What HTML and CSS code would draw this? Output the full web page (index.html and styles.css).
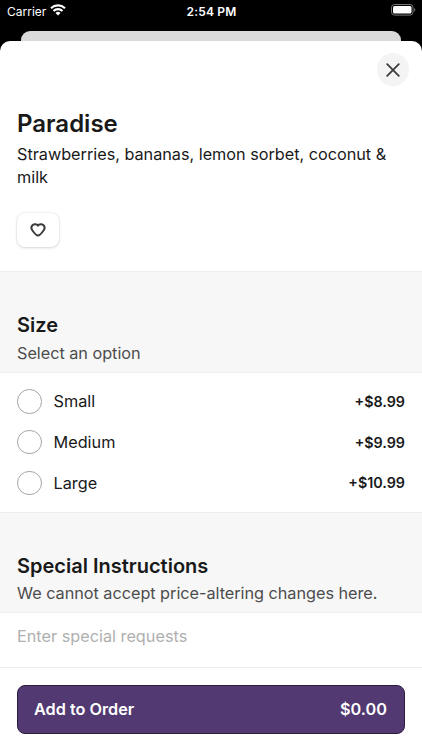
FILE: index.html
```html
<!DOCTYPE html>
<html lang="en">
<head>
<meta charset="utf-8">
<title>Paradise</title>
<link rel="stylesheet" href="styles.css">
</head>
<body>
<header class="status">
  <div class="carrier"><span>Carrier</span>
    <svg width="16" height="12" viewBox="0 0 16 12" fill="none" stroke="#fff" stroke-width="2.2"><path d="M1 4.200a10.200 10.200 0 0 1 14 0M3.500 7a6.500 6.500 0 0 1 9 0"/><path d="M8 11.500 5.500 9a3.600 3.600 0 0 1 5 0z" fill="#fff" stroke="none"/></svg>
  </div>
  <time class="clock">2:54 PM</time>
  <svg class="battery" width="25" height="12" viewBox="0 0 25 12"><rect x=".5" y=".5" width="21.5" height="10.6" rx="3" fill="none" stroke="#777"/><rect x="2" y="2" width="18.5" height="7.6" rx="1.6" fill="#fff"/><path d="M23.2 4v3.700c1.500-.6 1.500-3.100 0-3.700z" fill="#777"/></svg>
</header>
<div class="backdrop"></div>
<main class="sheet">
  <div class="toolbar">
    <button class="close" aria-label="Close"><svg width="14" height="14" viewBox="0 0 14 14" fill="none" stroke="#3c3c3c" stroke-width="1.8" stroke-linecap="round"><path d="m1.200 1.200 11.600 11.600M12.800 1.200 1.200 12.800"/></svg></button>
  </div>
  <section class="intro">
    <h1>Paradise</h1>
    <p>Strawberries, bananas, lemon sorbet, coconut &amp; milk</p>
    <button class="favorite" aria-label="Favorite"><svg width="16" height="14" viewBox="0 0 16 14" fill="none" stroke="#3c3c3c" stroke-width="2" stroke-linejoin="round"><path d="M8 2.600C6.800.9 4.200.7 2.700 2 1.200 3.400 1.200 5.600 2.300 7.200 3.600 9.100 6.500 12.500 8 12.500S12.400 9.100 13.700 7.200C14.800 5.600 14.800 3.400 13.300 2 11.800.7 9.200.9 8 2.600z"/></svg></button>
  </section>
  <section class="heading">
    <h2>Size</h2>
    <p>Select an option</p>
  </section>
  <ul class="options">
    <li><span class="radio"></span><span>Small</span><b>+$8.99</b></li>
    <li><span class="radio"></span><span>Medium</span><b>+$9.99</b></li>
    <li><span class="radio"></span><span>Large</span><b>+$10.99</b></li>
  </ul>
  <section class="heading instructions">
    <h2>Special Instructions</h2>
    <p>We cannot accept price-altering changes here.</p>
  </section>
  <div class="request">Enter special requests</div>
  <footer><button class="order"><span>Add to Order</span><span>$0.00</span></button></footer>
</main>
</body>
</html>
```
FILE: styles.css
```css
* { box-sizing: border-box; }
body { margin: 0; width: 422px; height: 750px; overflow: hidden; background: #000; font-family: Inter, sans-serif; color: #191919; font-size: 16.25px; }
h1, h2, p, ul { margin: 0; padding: 0; font-weight: 400; }
button { border: 0; padding: 0; font: inherit; }
svg { display: block; }
.status { height: 31px; padding: 4px 6px 0 7px; display: grid; grid-template-columns: 1fr auto 1fr; align-items: start; color: #fff; font-size: 12px; line-height: 15px; }
.carrier { display: flex; gap: 4px; }
.clock { font-weight: 600; letter-spacing: .2px; }
.battery { justify-self: end; }
.backdrop { height: 10px; margin: 0 21px; background: #dadada; border-radius: 9px 9px 0 0; }
.sheet { height: 709px; background: #fff; border-radius: 10px 10px 0 0; }
.toolbar { height: 64px; padding: 12px 13px 0; display: flex; justify-content: flex-end; }
.close { width: 32px; height: 33px; border-radius: 50%; background: #f4f4f4; display: grid; place-items: center; }
.intro { height: 166px; padding: 4px 17px 0; }
h1 { font-size: 24px; line-height: 30px; font-weight: 600; }
.intro p { margin-top: 4px; line-height: 22.5px; letter-spacing: -.02px; }
.favorite { width: 42px; height: 34px; margin-top: 25px; border-radius: 8px; background: #fff; display: grid; place-items: center; box-shadow: 0 0 2px rgba(0,0,0,.14), 0 1px 3px rgba(0,0,0,.12); }
.heading { height: 102px; padding: 41px 17px 0; background: #f7f7f7; border-top: 1px solid #eee; border-bottom: 1px solid #eee; }
h2 { font-size: 20px; line-height: 24px; font-weight: 600; }
.heading p { margin-top: 5px; line-height: 22px; color: #4c4c4c; letter-spacing: -.03px; }
.heading.instructions { height: 101px; }
.instructions p { margin-top: 4px; }
.options { height: 139px; padding: 8px 17px 0; list-style: none; }
.options li { display: flex; align-items: center; height: 40.75px; }
.radio { width: 24.5px; height: 24.5px; margin-right: 12px; border: 1px solid #a5a5a5; border-radius: 50%; }
.options b { margin-left: auto; font-size: 14.3px; font-weight: 600; }
.request { height: 54px; padding: 12px 17px; line-height: 22px; color: #afafaf; }
footer { border-top: 1px solid #ebebeb; padding: 17px 17px 16px; }
.order { display: flex; justify-content: space-between; align-items: center; width: 100%; height: 49px; padding: 0 17px 1px 16px; border: 1px solid #2c1d40; border-radius: 8px; background: #523971; color: #fff; font-weight: 600; }
```
